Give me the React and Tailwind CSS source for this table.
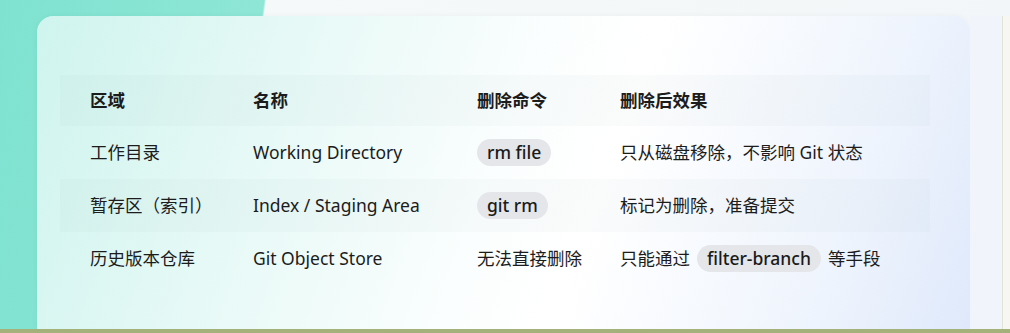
const rows = [
  { zone: '工作目录', name: 'Working Directory', cmd: 'rm file', effect: ['只从磁盘移除，不影响 Git 状态'], shaded: false },
  { zone: '暂存区（索引）', name: 'Index / Staging Area', cmd: 'git rm', effect: ['标记为删除，准备提交'], shaded: true },
  { zone: '历史版本仓库', name: 'Git Object Store', cmd: null, effect: ['只能通过', 'filter-branch', '等手段'], shaded: false },
];

const Pill = ({ children }) => (
  <span className="inline-flex items-center h-[27px] px-[10px] rounded-full bg-[#e4e6e9] font-medium text-[#1a1a1a]">
    {children}
  </span>
);

export default function App() {
  return (
    <div
      className="w-[1010px] h-[333px] overflow-hidden flex flex-col bg-[linear-gradient(98deg,#7fe2d0_0,#8ee6d6_25%,#f6f9f9_25.2%,#f3f6f8_100%)]"
      style={{ fontFamily: '"Noto Sans", "Noto Sans CJK SC", sans-serif' }}
    >
      <div className="flex-1 flex pt-[16px] pl-[37px] min-h-0">
        <div className="w-[933px] rounded-t-[16px] bg-[linear-gradient(110deg,#cff4ee_0%,#e6f9f6_25%,#fbfefe_50%,#ffffff_60%,#eef4fd_85%,#dfe9fb_100%)] shadow-[0_0_6px_rgba(0,0,0,0.04)] pt-[59px] pl-[23px] pr-[40px]">
          <div className="text-[17.5px] text-[#1c1c1c]">
            <div className="grid grid-cols-[163px_224px_143px_1fr] items-center h-[51px] pl-[30px] bg-[rgba(120,130,140,0.035)] font-bold">
              <div>区域</div>
              <div>名称</div>
              <div>删除命令</div>
              <div>删除后效果</div>
            </div>
            {rows.map((r) => (
              <div
                key={r.zone}
                className={`grid grid-cols-[163px_224px_143px_1fr] items-center h-[53px] pl-[30px] ${r.shaded ? 'bg-[rgba(120,130,140,0.035)]' : ''}`}
              >
                <div>{r.zone}</div>
                <div>{r.name}</div>
                <div>{r.cmd ? <Pill>{r.cmd}</Pill> : '无法直接删除'}</div>
                <div className="flex items-center gap-[7px]">
                  {r.effect.length === 1 ? (
                    <span>{r.effect[0]}</span>
                  ) : (
                    <>
                      <span>{r.effect[0]}</span>
                      <Pill>{r.effect[1]}</Pill>
                      <span>{r.effect[2]}</span>
                    </>
                  )}
                </div>
              </div>
            ))}
          </div>
        </div>
        <div className="w-[32px] bg-[#f1f5fb]" />
        <div className="flex-1 bg-[#f7f6f0] border-l-[1px] border-[#dfe3d8]" />
      </div>
      <div className="h-[4px] bg-[#a4b17a]" />
    </div>
  );
}
